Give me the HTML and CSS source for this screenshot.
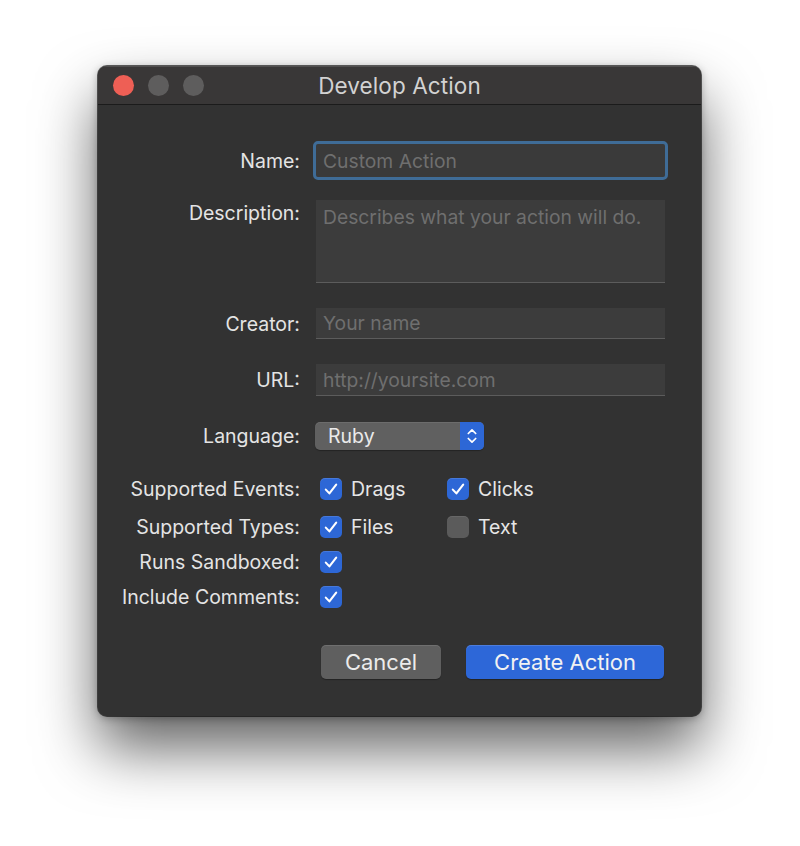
FILE: index.html
```html
<!DOCTYPE html>
<html>
<head>
<meta charset="utf-8">
<link rel="stylesheet" href="styles.css">
</head>
<body>
<div class="window">
  <div class="titlebar">
    <div class="lights">
      <span class="light close"></span>
      <span class="light"></span>
      <span class="light"></span>
    </div>
    <div class="title">Develop Action</div>
    <div></div>
  </div>
  <div class="form">
    <div class="row row-name">
      <label class="label">Name:</label>
      <div class="field focused"><span class="ph">Custom Action</span></div>
    </div>
    <div class="row row-desc">
      <label class="label label-top">Description:</label>
      <div class="field area"><span class="ph">Describes what your action will do.</span></div>
    </div>
    <div class="row row-creator">
      <label class="label">Creator:</label>
      <div class="field"><span class="ph">Your name</span></div>
    </div>
    <div class="row row-url">
      <label class="label">URL:</label>
      <div class="field"><span class="ph">http://yoursite.com</span></div>
    </div>
    <div class="row row-lang">
      <label class="label">Language:</label>
      <div class="popup">
        <span class="popup-text">Ruby</span>
        <span class="popup-arrows">
          <svg width="12" height="20" viewBox="0 0 12 20"><path d="M2.3 7.5 L6 3.8 L9.7 7.5 M2.3 12.5 L6 16.2 L9.7 12.5" fill="none" stroke="#fff" stroke-width="1.7" stroke-linecap="round" stroke-linejoin="round"/></svg>
        </span>
      </div>
    </div>
    <div class="row row-check row-events">
      <label class="label">Supported Events:</label>
      <div class="checks">
        <div class="check-item"><span class="cb on"><svg width="22" height="22" viewBox="0 0 22 22"><path d="M5.8 11.6 L9.4 15.4 L16.2 6.6" fill="none" stroke="#fff" stroke-width="2.1" stroke-linecap="round" stroke-linejoin="round"/></svg></span><span class="cb-label">Drags</span></div>
        <div class="check-item"><span class="cb on"><svg width="22" height="22" viewBox="0 0 22 22"><path d="M5.8 11.6 L9.4 15.4 L16.2 6.6" fill="none" stroke="#fff" stroke-width="2.1" stroke-linecap="round" stroke-linejoin="round"/></svg></span><span class="cb-label">Clicks</span></div>
      </div>
    </div>
    <div class="row row-check row-types">
      <label class="label">Supported Types:</label>
      <div class="checks">
        <div class="check-item"><span class="cb on"><svg width="22" height="22" viewBox="0 0 22 22"><path d="M5.8 11.6 L9.4 15.4 L16.2 6.6" fill="none" stroke="#fff" stroke-width="2.1" stroke-linecap="round" stroke-linejoin="round"/></svg></span><span class="cb-label">Files</span></div>
        <div class="check-item"><span class="cb off"></span><span class="cb-label">Text</span></div>
      </div>
    </div>
    <div class="row row-check row-sand">
      <label class="label">Runs Sandboxed:</label>
      <div class="checks">
        <div class="check-item"><span class="cb on"><svg width="22" height="22" viewBox="0 0 22 22"><path d="M5.8 11.6 L9.4 15.4 L16.2 6.6" fill="none" stroke="#fff" stroke-width="2.1" stroke-linecap="round" stroke-linejoin="round"/></svg></span></div>
      </div>
    </div>
    <div class="row row-check row-comments">
      <label class="label">Include Comments:</label>
      <div class="checks">
        <div class="check-item"><span class="cb on"><svg width="22" height="22" viewBox="0 0 22 22"><path d="M5.8 11.6 L9.4 15.4 L16.2 6.6" fill="none" stroke="#fff" stroke-width="2.1" stroke-linecap="round" stroke-linejoin="round"/></svg></span></div>
      </div>
    </div>
    <div class="buttons">
      <button class="btn cancel">Cancel</button>
      <button class="btn primary">Create Action</button>
    </div>
  </div>
</div>
</body>
</html>
```

FILE: styles.css
```css
html, body {
  margin: 0;
  padding: 0;
  background: #ffffff;
  height: 846px;
  overflow: hidden;
}
body {
  font-family: "Inter", "Liberation Sans", sans-serif;
  padding-top: 66px;
  box-sizing: border-box;
}
.window {
  margin-left: 98px;
  width: 603px;
  height: 650px;
  box-sizing: border-box;
  background: #323232;
  border-radius: 9px;
  overflow: hidden;
  box-shadow: 0 0 0 1px rgba(0,0,0,0.6), 0 2px 8px rgba(0,0,0,0.3), 0 32px 60px rgba(0,0,0,0.62);
  display: flex;
  flex-direction: column;
}
.titlebar {
  height: 38px;
  flex: none;
  background: #393737;
  border-bottom: 1px solid #1b1b1b;
  display: grid;
  grid-template-columns: 1fr auto 1fr;
  align-items: center;
  box-shadow: inset 0 1px 0 rgba(255,255,255,0.12);
}
.lights {
  display: flex;
  gap: 14px;
  padding-left: 15px;
}
.light {
  width: 21px;
  height: 21px;
  border-radius: 50%;
  background: #5e5d5d;
}
.light.close {
  background: #ee5f55;
}
.title {
  color: #d2d2d2;
  font-size: 22.5px;
  letter-spacing: 0.1px;
}
.form {
  display: flex;
  flex-direction: column;
  padding-right: 36px;
}
.row {
  display: flex;
  align-items: center;
  gap: 16px;
}
.label {
  width: 202px;
  flex: none;
  text-align: right;
  color: #e4e4e4;
  font-size: 19.5px;
  line-height: 22px;
}
.label-top {
  align-self: flex-start;
  padding-top: 2px;
}
.field {
  flex: 1;
  height: 100%;
  box-sizing: border-box;
  background: #3c3c3c;
  border-bottom: 1px solid #5c5c5c;
  display: flex;
  align-items: center;
  padding-left: 7px;
}
.ph {
  color: #6f6f6f;
  font-size: 19.3px;
  line-height: 22px;
}
.field.focused {
  border-bottom: none;
  outline: 3px solid #3f6c97;
  outline-offset: 0;
  border-radius: 2px;
  background: #3a3a3a;
}
.field.area {
  align-items: flex-start;
  padding-top: 6px;
}
.row-name { margin-top: 39px; height: 33px; }
.row-desc { margin-top: 23px; height: 83px; align-items: flex-start; }
.row-creator { margin-top: 25px; height: 31px; }
.row-url { margin-top: 25px; height: 32px; }
.row-lang { margin-top: 26px; height: 28px; }
.row-events { margin-top: 28px; height: 22px; }
.row-types { margin-top: 16px; height: 22px; }
.row-sand { margin-top: 13px; height: 22px; }
.row-comments { margin-top: 13px; height: 22px; }

.popup {
  width: 169px;
  height: 28px;
  margin-left: -1px;
  box-sizing: border-box;
  border-radius: 5px;
  background: #606060;
  box-shadow: inset 0 1px 0 rgba(255,255,255,0.08), 0 1px 1px rgba(0,0,0,0.3);
  display: flex;
  align-items: center;
  overflow: hidden;
}
.popup-text {
  flex: 1;
  padding-left: 13px;
  color: #eaeaea;
  font-size: 19.5px;
}
.popup-arrows {
  width: 24px;
  height: 100%;
  background: #2d67d6;
  display: flex;
  align-items: center;
  justify-content: center;
}
.checks {
  display: flex;
  align-items: center;
  padding-left: 4px;
}
.check-item {
  display: flex;
  align-items: center;
  gap: 9px;
  width: 127px;
}
.cb {
  width: 22px;
  height: 22px;
  box-sizing: border-box;
  border-radius: 5px;
  display: flex;
  align-items: center;
  justify-content: center;
  flex: none;
}
.cb.on {
  background: #2d67d6;
  box-shadow: inset 0 1px 0 rgba(255,255,255,0.12);
}
.cb.off {
  background: #5b5b5b;
  box-shadow: inset 0 1px 0 rgba(255,255,255,0.08);
}
.cb-label {
  color: #e6e6e6;
  font-size: 19.5px;
}
.buttons {
  margin-top: 37px;
  display: flex;
  justify-content: flex-end;
  gap: 25px;
  padding-right: 1px;
}
.btn {
  height: 34px;
  border: none;
  border-radius: 5px;
  font-family: "Inter", "Liberation Sans", sans-serif;
  font-size: 22px;
  color: #ececec;
  padding: 0;
}
.btn.cancel {
  width: 120px;
  background: #5f5f5f;
  box-shadow: inset 0 1px 0 rgba(255,255,255,0.1), 0 1px 1px rgba(0,0,0,0.3);
}
.btn.primary {
  width: 198px;
  background: #2d67d8;
  color: #f2f2f2;
  box-shadow: inset 0 1px 0 rgba(255,255,255,0.15), 0 1px 1px rgba(0,0,0,0.3);
}
```
